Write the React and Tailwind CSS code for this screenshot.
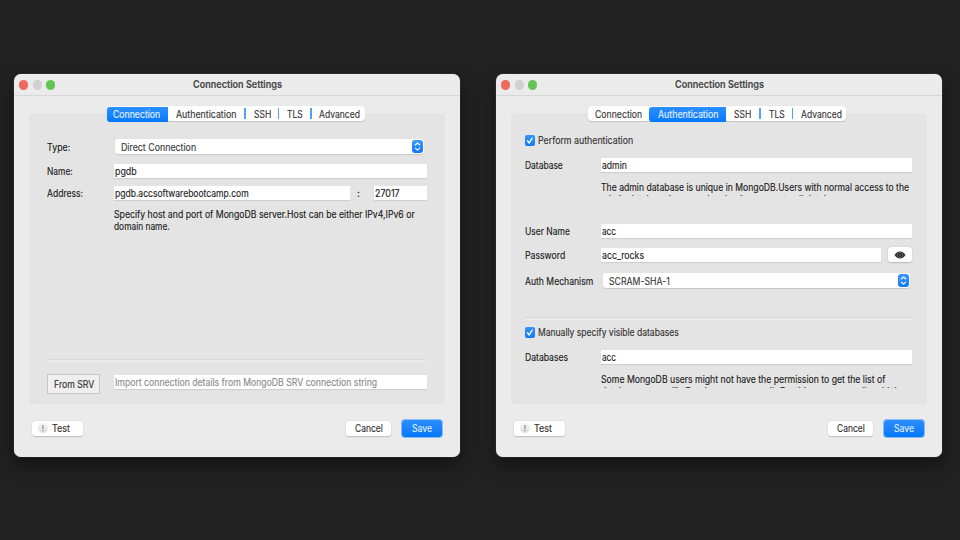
import { useLayoutEffect, useRef, useState } from "react";

// Single line of text, condensed horizontally to the given width.
function T({ w, className = "", children }) {
  const ref = useRef(null);
  const [scale, setScale] = useState(1);
  useLayoutEffect(() => {
    setScale(w / ref.current.offsetWidth);
  }, [w]);
  return (
    <span className={"block shrink-0 whitespace-nowrap " + className} style={{ width: w }}>
      <span ref={ref} className="inline-block origin-left" style={{ transform: `scaleX(${scale})` }}>
        {children}
      </span>
    </span>
  );
}

function Field({ className = "", children }) {
  return (
    <div className={"flex h-[14px] shrink-0 items-center bg-white pl-px shadow-[0_1px_1px_rgba(0,0,0,0.09)] " + className}>
      {children}
    </div>
  );
}

function Select({ className = "", children }) {
  return (
    <div className={"flex h-[15px] shrink-0 items-center justify-between rounded-[3px] bg-white pr-px pl-[5.5px] text-[#3a3a3a] shadow-[0_1px_1px_rgba(0,0,0,0.13)] " + className}>
      {children}
      <svg className="h-[13px] w-[11px] rounded-[3px] bg-linear-to-b from-[#3b9aff] to-[#0a78f8]" viewBox="0 0 11 13" fill="none" stroke="white" strokeWidth="1.1" strokeLinecap="round" strokeLinejoin="round">
        <path d="M3.3 5 5.5 3 7.7 5M3.3 8.2 5.5 10.2 7.7 8.2" />
      </svg>
    </div>
  );
}

function Check({ w, children }) {
  return (
    <div className="flex h-[12px] items-center gap-[3.5px] text-[#333]">
      <svg className="h-[11px] w-[9.500px] shrink-0 rounded-[2px] bg-linear-to-b from-[#3493fb] to-[#0b7bf9]" viewBox="0 0 9 11" fill="none" stroke="white" strokeWidth="1.4" strokeLinecap="round" strokeLinejoin="round">
        <path d="M2.2 5.8 3.9 8 6.9 3.1" />
      </svg>
      <T w={w}>{children}</T>
    </div>
  );
}

function Rule() {
  return <div className="h-[3px] shrink-0 border-t border-[#d8d8d8] bg-[#ebebeb]" />;
}

function Divider() {
  return <div className="h-[11px] w-[1.5px] shrink-0 bg-[#4ea2fb]" />;
}

function Tabs({ second }) {
  const blue = " -mb-px h-[15px] self-end bg-linear-to-b from-[#2b90ff] to-[#0079fb] pb-[2px] text-[#e3f0ff]";
  return (
    <div className="flex h-[15px] w-[258px] shrink-0 items-center rounded-[4px] bg-white text-[#363636] shadow-[0_0.5px_1px_rgba(0,0,0,0.15)]">
      <div className={"flex h-[15px] w-[61px] items-center rounded-l-[3px] " + (second ? "pl-[7px]" : "pl-[6px]" + blue)}>
        <T w={47}>Connection</T>
      </div>
      <div className={"flex h-[15px] items-center " + (second ? "w-[77px] rounded-l-[3px] pl-[9px]" + blue : "w-[76px] pl-[8px]")}>
        <T w={60}>Authentication</T>
      </div>
      {second ? null : <Divider />}
      <div className={"flex items-center pl-[8px] " + (second ? "w-[33px]" : "w-[32px]")}>
        <T w={17}>SSH</T>
      </div>
      <Divider />
      <div className="flex w-[31px] items-center pl-[8px]">
        <T w={16}>TLS</T>
      </div>
      <Divider />
      <div className="flex items-center pl-[7.5px]">
        <T w={41}>Advanced</T>
      </div>
    </div>
  );
}

function Dialog({ second, children }) {
  return (
    <section className="flex h-[383px] w-[446px] shrink-0 flex-col rounded-[7px] bg-[#ebebeb] shadow-[0_0_1px_#999,0_8px_18px_rgba(0,0,0,0.45)]">
      <header className="flex h-[22px] shrink-0 items-center border-b border-[#d7d7d7] pl-[5px]">
        <div className="flex gap-[4.5px]">
          <i className="h-[10px] w-[9px] rounded-full bg-[#ed6a5e]" />
          <i className="h-[10px] w-[9px] rounded-full bg-[#d1d1d1]" />
          <i className="h-[10px] w-[9px] rounded-full bg-[#61c554]" />
        </div>
        <T w={89} className="mb-px ml-[137.5px] font-semibold text-[#484848]">Connection Settings</T>
      </header>
      <div className="mt-[18px] ml-[15px] h-[290px] w-[416px] rounded-[4px] border border-[#e2e2e2] bg-[#e4e4e4] text-[#1c1c1c]">
        <div className={"-mt-[9px] " + (second ? "ml-[76px]" : "ml-[77px]")}>
          <Tabs second={second} />
        </div>
        {children}
      </div>
      <footer className="mt-[15px] flex h-[18px] items-center pr-[18px] pl-[18px] text-[#303030]">
        <div className="flex h-[15px] w-[51px] items-center gap-[4px] rounded-[3px] bg-white pl-[6px] shadow-[0_0.5px_1.5px_rgba(0,0,0,0.2)]">
          <span className="flex h-[10px] w-[10px] items-center justify-center rounded-full bg-linear-to-b from-[#f5f5f5] to-[#dedede] text-[8px] text-[#777]">!</span>
          <T w={18}>Test</T>
        </div>
        <div className="ml-auto flex h-[15px] w-[45px] items-center justify-center rounded-[3px] bg-white shadow-[0_0.5px_1.5px_rgba(0,0,0,0.2)]">
          <T w={28}>Cancel</T>
        </div>
        <div className="ml-[11px] flex h-[17px] w-[40px] items-center justify-center rounded-[3px] bg-linear-to-b from-[#2b8dff] to-[#0078fb] text-[#deedff] shadow-[0_0_0_1px_#8dbcf5]">
          <T w={20}>Save</T>
        </div>
      </footer>
    </section>
  );
}

export default function App() {
  return (
    <main className="flex h-[540px] w-[960px] gap-[36px] overflow-hidden bg-[#212121] pt-[74px] pl-[14px] font-['Inter','Liberation_Sans',sans-serif] text-[10px] leading-[12px] [-webkit-text-stroke:0.15px_currentColor]">
      <Dialog>
        <div className="flex flex-col pr-[18px] pl-[17px]">
          <div className="mt-[18px] flex h-[15px] items-center">
            <T w={23}>Type:</T>
            <Select className="ml-[45px] w-[309px]"><T w={75}>Direct Connection</T></Select>
          </div>
          <div className="mt-[10px] flex h-[14px] items-center">
            <T w={26}>Name:</T>
            <Field className="ml-[41px] w-[313px]"><T w={22}>pgdb</T></Field>
          </div>
          <div className="mt-[8px] flex h-[14px] items-center">
            <T w={36}>Address:</T>
            <Field className="ml-[31px] w-[236px]"><T w={134}>pgdb.accsoftwarebootcamp.com</T></Field>
            <T w={3} className="ml-[7px]">:</T>
            <Field className="ml-[14px] w-[53px]"><T w={25}>27017</T></Field>
          </div>
          <div className="mt-[8px] ml-[66.5px]">
            <T w={301}>Specify host and port of MongoDB server.Host can be either IPv4,IPv6 or</T>
            <T w={56}>domain name.</T>
          </div>
          <div className="mt-[127px]"><Rule /></div>
          <div className="mt-[12px] flex h-[20px]">
            <div className="flex h-[20px] w-[53px] shrink-0 items-center justify-center border border-[#c6c6c6] bg-[#efefef] text-[#333]"><T w={40}>From SRV</T></div>
            <Field className="mt-px ml-[14px] w-[313px] text-[#8b8b8b]"><T w={262}>Import connection details from MongoDB SRV connection string</T></Field>
          </div>
        </div>
      </Dialog>
      <Dialog second>
        <div className="flex flex-col pr-[14px] pl-[13px]">
          <div className="mt-[13px]"><Check w={95}>Perform authentication</Check></div>
          <div className="mt-[12px] flex h-[14px] items-center">
            <T w={38}>Database</T>
            <Field className="ml-[38px] w-[311px]"><T w={25}>admin</T></Field>
          </div>
          <div className="mt-[9px] ml-[75.5px] h-[15px] overflow-hidden">
            <T w={308}>The admin database is unique in MongoDB.Users with normal access to the</T>
            <T w={250}>admin database have read and write access to all databases.</T>
          </div>
          <div className="mt-[28px] flex h-[14px] items-center">
            <T w={45}>User Name</T>
            <Field className="ml-[31px] w-[311px]"><T w={14}>acc</T></Field>
          </div>
          <div className="mt-[9px] flex h-[15px] items-center">
            <T w={40}>Password</T>
            <Field className="ml-[36px] w-[279.500px]"><T w={42}>acc_rocks</T></Field>
            <div className="ml-[7.500px] flex h-[15px] w-[24px] items-center justify-center rounded-[3px] bg-white shadow-[0_0.5px_1.5px_rgba(0,0,0,0.2)]">
              <svg className="h-[8px] w-[12px]" viewBox="0 0 12 8">
                <path d="M.5 4C2 1.500 4 .5 6 .5S10 1.500 11.500 4C10 6.500 8 7.500 6 7.500S2 6.500.5 4Z" fill="#333" />
                <ellipse cx="6" cy="4" rx="2.600" ry="2.500" fill="#222" stroke="#888" strokeWidth=".6" />
                <circle cx="6" cy="4" r=".7" fill="#888" />
              </svg>
            </div>
          </div>
          <div className="mt-[11px] flex h-[15px] items-center">
            <T w={68}>Auth Mechanism</T>
            <Select className="ml-[10px] w-[307px]"><T w={61}>SCRAM-SHA-1</T></Select>
          </div>
          <div className="mt-[29px]"><Rule /></div>
          <div className="mt-[6px]"><Check w={141}>Manually specify visible databases</Check></div>
          <div className="mt-[12px] flex h-[14px] items-center">
            <T w={43}>Databases</T>
            <Field className="ml-[33px] w-[311px]"><T w={14}>acc</T></Field>
          </div>
          <div className="mt-[9px] ml-[75.5px] h-[15px] overflow-hidden">
            <T w={284}>Some MongoDB users might not have the permission to get the list of</T>
            <T w={304}>database names (listDatabases command). For this case manually add the</T>
          </div>
        </div>
      </Dialog>
    </main>
  );
}
